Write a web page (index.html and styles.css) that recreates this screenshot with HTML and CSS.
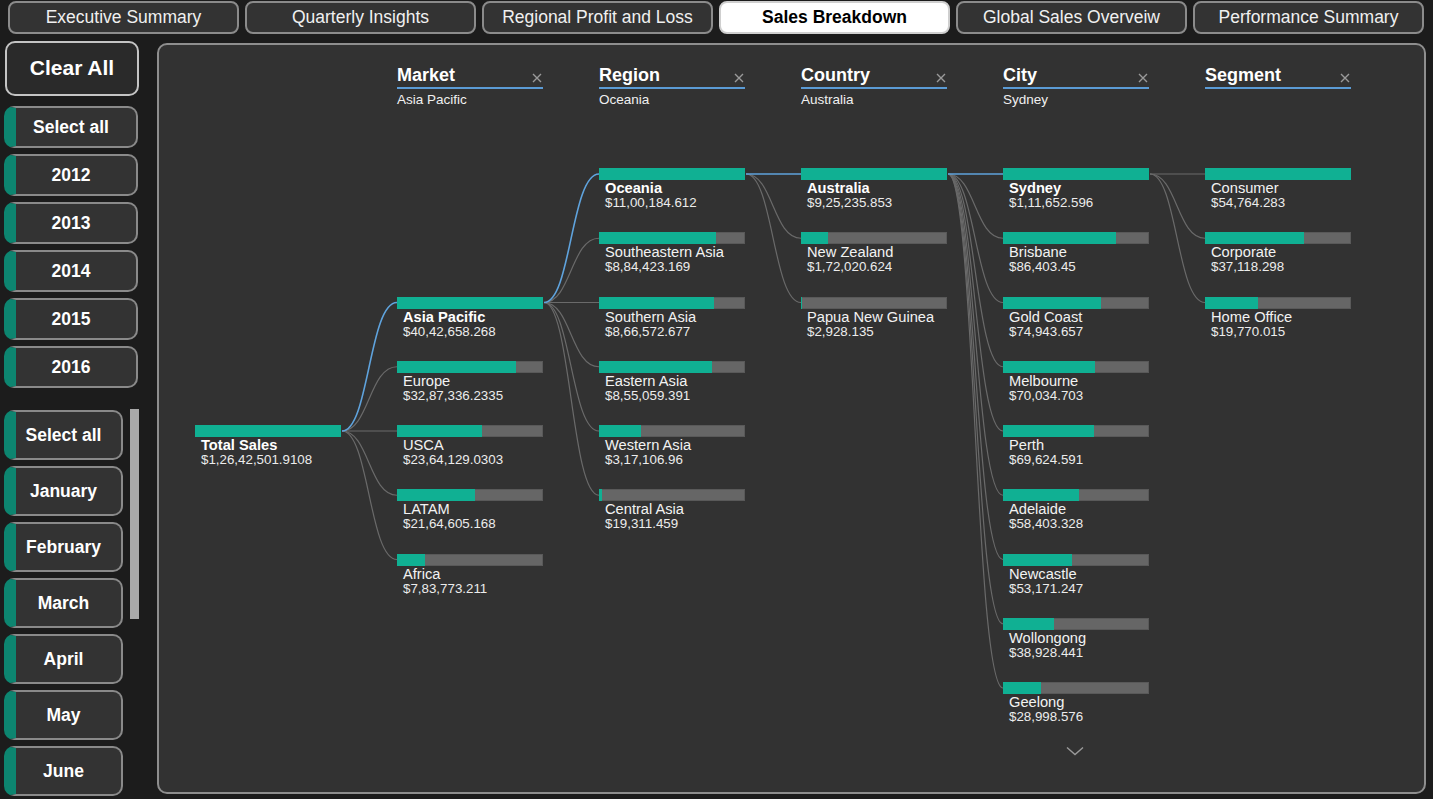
FILE: index.html
```html
<!DOCTYPE html>
<html lang="en">
<head>
<meta charset="utf-8">
<title>Sales Breakdown</title>
<link rel="stylesheet" href="styles.css">
</head>
<body>
<nav class="tabs">
  <div class="tab">Executive Summary</div>
  <div class="tab">Quarterly Insights</div>
  <div class="tab">Regional Profit and Loss</div>
  <div class="tab tab-active">Sales Breakdown</div>
  <div class="tab">Global Sales Overveiw</div>
  <div class="tab">Performance Summary</div>
</nav>

<div class="main">
  <aside class="sidebar">
    <div class="clear-btn">Clear All</div>
    <div class="years">
      <div class="slicer-btn">Select all</div>
      <div class="slicer-btn">2012</div>
      <div class="slicer-btn">2013</div>
      <div class="slicer-btn">2014</div>
      <div class="slicer-btn">2015</div>
      <div class="slicer-btn">2016</div>
    </div>
    <div class="months-wrap">
      <div class="months">
        <div class="slicer-btn month">Select all</div>
        <div class="slicer-btn month">January</div>
        <div class="slicer-btn month">February</div>
        <div class="slicer-btn month">March</div>
        <div class="slicer-btn month">April</div>
        <div class="slicer-btn month">May</div>
        <div class="slicer-btn month">June</div>
      </div>
      <div class="scrollbar"></div>
    </div>
  </aside>

  <section class="panel">
    <svg class="links" width="1265" height="747" viewBox="0 0 1265 747">
      <g transform="translate(-159,-45)" fill="none" stroke="#6a6a6a" stroke-width="1.2">
        <path d="M342 431 C369 431 369 366.75 397 366.75"/>
        <path d="M342 431 L397 431"/>
        <path d="M342 431 C369 431 369 495.25 397 495.25"/>
        <path d="M342 431 C369 431 369 559.5 397 559.5"/>

        <path d="M544 302.5 C571 302.5 571 238.25 599 238.25"/>
        <path d="M544 302.5 L599 302.5"/>
        <path d="M544 302.5 C571 302.5 571 366.75 599 366.75"/>
        <path d="M544 302.5 C571 302.5 571 431 599 431"/>
        <path d="M544 302.5 C571 302.5 571 495.25 599 495.25"/>

        <path d="M746 174 C773 174 773 238.25 801 238.25"/>
        <path d="M746 174 C773 174 773 302.5 801 302.5"/>

        <path d="M948 174 C975 174 975 238.25 1003 238.25"/>
        <path d="M948 174 C975 174 975 302.5 1003 302.5"/>
        <path d="M948 174 C975 174 975 366.75 1003 366.75"/>
        <path d="M948 174 C975 174 975 431 1003 431"/>
        <path d="M948 174 C975 174 975 495.25 1003 495.25"/>
        <path d="M948 174 C975 174 975 559.5 1003 559.5"/>
        <path d="M948 174 C975 174 975 623.75 1003 623.75"/>
        <path d="M948 174 C975 174 975 688 1003 688"/>

        <path d="M1150 174 L1205 174"/>
        <path d="M1150 174 C1177 174 1177 238.25 1205 238.25"/>
        <path d="M1150 174 C1177 174 1177 302.5 1205 302.5"/>
      </g>
      <g transform="translate(-159,-45)" fill="none" stroke="#5fa3dd" stroke-width="1.6">
        <path d="M342 431 C369 431 369 302.5 397 302.5"/>
        <path d="M544 302.5 C571 302.5 571 174 599 174"/>
        <path d="M746 174 L801 174"/>
        <path d="M948 174 L1003 174"/>
      </g>
    </svg>

    <div class="tree">
      <div class="col">
        <div class="col-head empty"></div>
        <div class="nodes" style="padding-top:257px">
          <div class="node sel"><div class="bar"><span class="fill" style="width:100%"></span></div><div class="name">Total Sales</div><div class="val">$1,26,42,501.9108</div></div>
        </div>
      </div>

      <div class="col">
        <div class="col-head">
          <div class="head-row"><span class="head-title">Market</span><svg class="x-icon" width="10" height="10" viewBox="0 0 10 10"><path d="M1 1 L9 9 M9 1 L1 9"/></svg></div>
          <div class="head-sub">Asia Pacific</div>
        </div>
        <div class="nodes" style="padding-top:128.5px">
          <div class="node sel"><div class="bar"><span class="fill" style="width:100%"></span></div><div class="name">Asia Pacific</div><div class="val">$40,42,658.268</div></div>
          <div class="node"><div class="bar"><span class="fill" style="width:81.3%"></span></div><div class="name">Europe</div><div class="val">$32,87,336.2335</div></div>
          <div class="node"><div class="bar"><span class="fill" style="width:58.5%"></span></div><div class="name">USCA</div><div class="val">$23,64,129.0303</div></div>
          <div class="node"><div class="bar"><span class="fill" style="width:53.5%"></span></div><div class="name">LATAM</div><div class="val">$21,64,605.168</div></div>
          <div class="node"><div class="bar"><span class="fill" style="width:19.4%"></span></div><div class="name">Africa</div><div class="val">$7,83,773.211</div></div>
        </div>
      </div>

      <div class="col">
        <div class="col-head">
          <div class="head-row"><span class="head-title">Region</span><svg class="x-icon" width="10" height="10" viewBox="0 0 10 10"><path d="M1 1 L9 9 M9 1 L1 9"/></svg></div>
          <div class="head-sub">Oceania</div>
        </div>
        <div class="nodes">
          <div class="node sel"><div class="bar"><span class="fill" style="width:100%"></span></div><div class="name">Oceania</div><div class="val">$11,00,184.612</div></div>
          <div class="node"><div class="bar"><span class="fill" style="width:80.4%"></span></div><div class="name">Southeastern Asia</div><div class="val">$8,84,423.169</div></div>
          <div class="node"><div class="bar"><span class="fill" style="width:78.8%"></span></div><div class="name">Southern Asia</div><div class="val">$8,66,572.677</div></div>
          <div class="node"><div class="bar"><span class="fill" style="width:77.7%"></span></div><div class="name">Eastern Asia</div><div class="val">$8,55,059.391</div></div>
          <div class="node"><div class="bar"><span class="fill" style="width:28.8%"></span></div><div class="name">Western Asia</div><div class="val">$3,17,106.96</div></div>
          <div class="node"><div class="bar"><span class="fill" style="width:1.8%"></span></div><div class="name">Central Asia</div><div class="val">$19,311.459</div></div>
        </div>
      </div>

      <div class="col">
        <div class="col-head">
          <div class="head-row"><span class="head-title">Country</span><svg class="x-icon" width="10" height="10" viewBox="0 0 10 10"><path d="M1 1 L9 9 M9 1 L1 9"/></svg></div>
          <div class="head-sub">Australia</div>
        </div>
        <div class="nodes">
          <div class="node sel"><div class="bar"><span class="fill" style="width:100%"></span></div><div class="name">Australia</div><div class="val">$9,25,235.853</div></div>
          <div class="node"><div class="bar"><span class="fill" style="width:18.6%"></span></div><div class="name">New Zealand</div><div class="val">$1,72,020.624</div></div>
          <div class="node"><div class="bar"><span class="fill" style="width:0.3%"></span></div><div class="name">Papua New Guinea</div><div class="val">$2,928.135</div></div>
        </div>
      </div>

      <div class="col">
        <div class="col-head">
          <div class="head-row"><span class="head-title">City</span><svg class="x-icon" width="10" height="10" viewBox="0 0 10 10"><path d="M1 1 L9 9 M9 1 L1 9"/></svg></div>
          <div class="head-sub">Sydney</div>
        </div>
        <div class="nodes">
          <div class="node sel"><div class="bar"><span class="fill" style="width:100%"></span></div><div class="name">Sydney</div><div class="val">$1,11,652.596</div></div>
          <div class="node"><div class="bar"><span class="fill" style="width:77.4%"></span></div><div class="name">Brisbane</div><div class="val">$86,403.45</div></div>
          <div class="node"><div class="bar"><span class="fill" style="width:67.1%"></span></div><div class="name">Gold Coast</div><div class="val">$74,943.657</div></div>
          <div class="node"><div class="bar"><span class="fill" style="width:62.7%"></span></div><div class="name">Melbourne</div><div class="val">$70,034.703</div></div>
          <div class="node"><div class="bar"><span class="fill" style="width:62.4%"></span></div><div class="name">Perth</div><div class="val">$69,624.591</div></div>
          <div class="node"><div class="bar"><span class="fill" style="width:52.3%"></span></div><div class="name">Adelaide</div><div class="val">$58,403.328</div></div>
          <div class="node"><div class="bar"><span class="fill" style="width:47.6%"></span></div><div class="name">Newcastle</div><div class="val">$53,171.247</div></div>
          <div class="node"><div class="bar"><span class="fill" style="width:34.9%"></span></div><div class="name">Wollongong</div><div class="val">$38,928.441</div></div>
          <div class="node"><div class="bar"><span class="fill" style="width:26%"></span></div><div class="name">Geelong</div><div class="val">$28,998.576</div></div>
          <div class="more"><svg width="18" height="10" viewBox="0 0 18 10"><path d="M1 1.5 L9 8.5 L17 1.5"/></svg></div>
        </div>
      </div>

      <div class="col">
        <div class="col-head">
          <div class="head-row"><span class="head-title">Segment</span><svg class="x-icon" width="10" height="10" viewBox="0 0 10 10"><path d="M1 1 L9 9 M9 1 L1 9"/></svg></div>
          <div class="head-sub"></div>
        </div>
        <div class="nodes">
          <div class="node"><div class="bar"><span class="fill" style="width:100%"></span></div><div class="name">Consumer</div><div class="val">$54,764.283</div></div>
          <div class="node"><div class="bar"><span class="fill" style="width:67.8%"></span></div><div class="name">Corporate</div><div class="val">$37,118.298</div></div>
          <div class="node"><div class="bar"><span class="fill" style="width:36.1%"></span></div><div class="name">Home Office</div><div class="val">$19,770.015</div></div>
        </div>
      </div>
    </div>
  </section>
</div>
</body>
</html>
```

FILE: styles.css
```css
* { box-sizing: border-box; }

html, body {
  margin: 0;
  padding: 0;
  width: 1433px;
  height: 799px;
  overflow: hidden;
  background: #1c1c1c;
  font-family: "Liberation Sans", Arial, sans-serif;
  color: #f2f2f2;
}

/* Top tabs */
.tabs {
  display: flex;
  gap: 6px;
  padding: 1px 0 0 8px;
  height: 34px;
}
.tab {
  width: 231px;
  height: 33px;
  border: 2px solid #8b8b8b;
  border-radius: 8px;
  background: #333333;
  color: #f0f0f0;
  font-size: 17.5px;
  display: flex;
  align-items: center;
  justify-content: center;
  padding-bottom: 1px;
}
.tab-active {
  background: #ffffff;
  border-color: #cfcfcf;
  color: #000;
  font-weight: bold;
}

/* Main area */
.main {
  display: flex;
  margin-top: 7px;
}

.sidebar {
  width: 139px;
  padding-left: 4px;
  flex: none;
}

.clear-btn {
  margin-left: 1px;
  width: 134px;
  height: 55px;
  border: 2px solid #c4c4c4;
  border-radius: 10px;
  background: #2a2a2a;
  font-size: 21px;
  font-weight: bold;
  color: #fff;
  display: flex;
  align-items: center;
  justify-content: center;
  padding-bottom: 1px;
}

.years {
  margin-top: 10px;
  display: flex;
  flex-direction: column;
  gap: 6px;
}

.slicer-btn {
  width: 134px;
  height: 42px;
  border: 2px solid #8a8a8a;
  border-left: 12px solid #0d8570;
  border-radius: 10px;
  background: #333333;
  color: #fff;
  font-size: 17.5px;
  font-weight: bold;
  display: flex;
  align-items: center;
  justify-content: center;
  padding-right: 10px;
}

.months-wrap {
  margin-top: 22px;
  display: flex;
  align-items: flex-start;
}
.months {
  display: flex;
  flex-direction: column;
  gap: 6px;
}
.slicer-btn.month {
  width: 119px;
  height: 50px;
  flex: none;
}
.scrollbar {
  margin-left: 7px;
  margin-top: -1px;
  width: 9px;
  height: 210px;
  background: #a9a9a9;
}

/* Panel */
.panel {
  position: relative;
  margin-top: 2px;
  margin-left: 18px;
  width: 1269px;
  height: 751px;
  border: 2px solid #8e8e8e;
  border-radius: 10px;
  background: #323232;
  padding: 19px 0 0 36px;
}

.links {
  position: absolute;
  left: 0;
  top: 0;
}

.tree {
  position: relative;
  display: flex;
  gap: 56px;
}

.col {
  width: 146px;
  flex: none;
}

.col-head {
  height: 42px;
}
.head-row {
  height: 25px;
  border-bottom: 2px solid #5b9bd5;
  display: flex;
  justify-content: space-between;
  align-items: flex-start;
}
.col-head.empty { border: none; }
.head-title {
  font-size: 18px;
  font-weight: bold;
  line-height: 23px;
  color: #fff;
  margin-top: -0.5px;
}
.x-icon {
  margin-top: 9px;
  margin-right: 1px;
}
.x-icon path {
  stroke: #9a9a9a;
  stroke-width: 1.4;
  fill: none;
}
.head-sub {
  margin-top: 3px;
  font-size: 13.5px;
  line-height: 15px;
  color: #f0f0f0;
}

.nodes {
  margin-top: 62px;
  display: flex;
  flex-direction: column;
}

.node {
  height: 64.25px;
  flex: none;
}
.bar {
  height: 12px;
  background: #666666;
  display: flex;
  box-shadow: inset 0 0 0 1px rgba(0, 0, 0, 0.12);
}
.fill {
  display: block;
  height: 12px;
  background: #10b093;
}
.name {
  margin-top: 1px;
  padding-left: 6px;
  font-size: 14.67px;
  line-height: 15px;
  color: #f2f2f2;
  white-space: nowrap;
}
.node.sel .name {
  font-weight: bold;
  color: #ffffff;
}
.val {
  padding-left: 6px;
  font-size: 13.33px;
  line-height: 14px;
  color: #ececec;
  white-space: nowrap;
}

.more {
  display: flex;
  justify-content: center;
  padding-right: 3px;
  height: 10px;
}
.more path {
  stroke: #9a9a9a;
  stroke-width: 1.4;
  fill: none;
}
```
